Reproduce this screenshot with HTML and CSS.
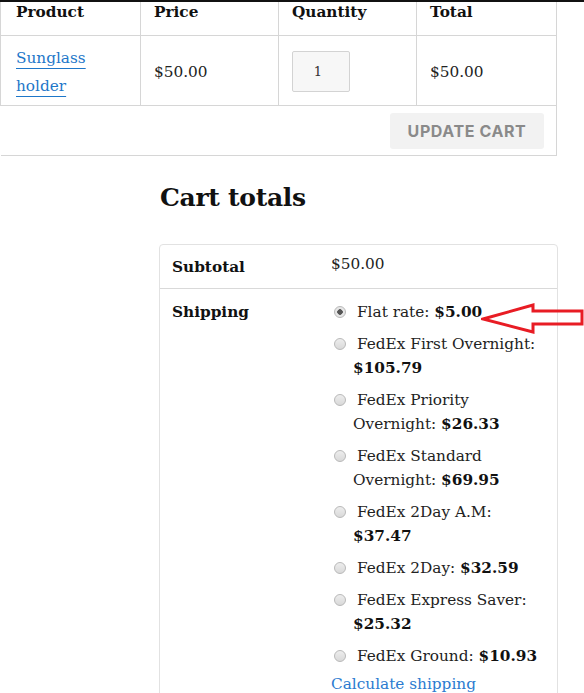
FILE: index.html
```html
<!DOCTYPE html>
<html>
<head>
<meta charset="utf-8">
<link rel="stylesheet" href="styles.css">
</head>
<body>
<div class="page">
  <table class="cart">
    <thead>
      <tr>
        <th class="c1">Product</th>
        <th class="c2">Price</th>
        <th class="c3">Quantity</th>
        <th class="c4">Total</th>
      </tr>
    </thead>
    <tbody>
      <tr class="item">
        <td><a href="#" class="plink">Sunglass holder</a></td>
        <td>$50.00</td>
        <td><input class="qty" type="text" value="1"></td>
        <td>$50.00</td>
      </tr>
      <tr class="actions">
        <td colspan="4"><button class="update">UPDATE CART</button></td>
      </tr>
    </tbody>
  </table>

  <section class="totals">
    <h2 class="totals-title">Cart totals</h2>
    <div class="totals-box">
      <div class="trow subtotal">
        <div class="tlabel">Subtotal</div>
        <div class="tvalue sub-amount">$50.00</div>
      </div>
      <div class="trow">
        <div class="tlabel">Shipping</div>
        <div class="tvalue">
          <ul class="methods">
            <li><span class="radio checked"></span>Flat rate: <strong>$5.00</strong></li>
            <li><span class="radio"></span>FedEx First Overnight: <strong>$105.79</strong></li>
            <li><span class="radio"></span>FedEx Priority Overnight: <strong>$26.33</strong></li>
            <li><span class="radio"></span>FedEx Standard Overnight: <strong>$69.95</strong></li>
            <li><span class="radio"></span>FedEx 2Day A.M: <strong>$37.47</strong></li>
            <li><span class="radio"></span>FedEx 2Day: <strong>$32.59</strong></li>
            <li><span class="radio"></span>FedEx Express Saver: <strong>$25.32</strong></li>
            <li><span class="radio"></span>FedEx Ground: <strong>$10.93</strong></li>
          </ul>
          <a href="#" class="calc">Calculate shipping</a>
        </div>
      </div>
    </div>
  </section>

  <svg class="arrow" width="104" height="34" viewBox="0 0 104 34">
    <polygon points="2,17 52,3 52,9 101,9 101,22 52,22 52,30" fill="none" stroke="#e81c24" stroke-width="3" stroke-linejoin="miter"/>
  </svg>
</div>
</body>
</html>
```

FILE: styles.css
```css
html, body {
  margin: 0;
  padding: 0;
  background: #fff;
}
body {
  font-family: "DejaVu Serif", "Liberation Serif", serif;
  font-size: 15.3px;
  color: #222;
  overflow: hidden;
}
.page {
  position: relative;
  width: 584px;
  height: 693px;
  border-top: 2px solid #111;
  box-sizing: border-box;
  overflow: hidden;
}
.cart {
  border-collapse: collapse;
  width: 556px;
  table-layout: fixed;
}
.cart th, .cart td {
  border: 1px solid #d6d6d6;
  text-align: left;
  padding: 0 13px;
  box-sizing: border-box;
}
.cart thead th {
  border-top: none;
  font-weight: bold;
  color: #111;
  line-height: 20px;
  padding-top: 0;
  padding-bottom: 13px;
  vertical-align: top;
}
.c1 { width: 140px; }
.c2 { width: 138px; }
.c3 { width: 138px; }
.c4 { width: 140px; }
.cart th.c1, .cart .item td:first-child { padding-left: 15px; }
.item td {
  height: 70px;
  line-height: 28px;
  vertical-align: middle;
  padding-top: 2px;
  padding-bottom: 0;
}
.plink {
  color: #1e77c9;
  text-decoration: underline;
  text-decoration-thickness: 1px;
  text-underline-offset: 5px;
  display: inline-block;
  width: 90px;
}
.qty {
  width: 58px;
  height: 41px;
  box-sizing: border-box;
  border: 1px solid #d3d3d3;
  border-radius: 2px;
  background: #f7f7f7;
  font-family: "DejaVu Serif", serif;
  font-size: 13px;
  color: #333;
  text-align: center;
  padding: 0 6px 0 0;
  display: block;
}
.actions td {
  border-left: none;
  height: 50px;
  text-align: right;
  padding: 0 12px 0 0;
  vertical-align: middle;
}
.update {
  width: 154px;
  height: 36px;
  border: none;
  border-radius: 3px;
  background: #f2f2f2;
  color: #8a8a8a;
  font-family: "Inter", "DejaVu Sans", sans-serif;
  font-weight: 700;
  font-size: 16px;
  letter-spacing: 0.6px;
  padding: 0;
  display: inline-block;
  vertical-align: middle;
}
.totals {
  margin-left: 159px;
  width: 399px;
}
.totals-title {
  font-family: "DejaVu Serif", serif;
  font-weight: bold;
  font-size: 25px;
  line-height: 36px;
  color: #111;
  margin: 24px 0 28px 1px;
  letter-spacing: -0.3px;
}
.totals-box {
  border: 1px solid #e2e2e2;
  border-radius: 4px;
}
.trow {
  display: flex;
  line-height: 24px;
}
.trow + .trow {
  border-top: 1px solid #d9d9d9;
}
.subtotal {
  padding: 10px 0 9px;
}
.sub-amount {
  margin-top: -3px;
}
.trow:not(.subtotal) {
  padding-top: 11px;
}
.tlabel {
  width: 159px;
  padding-left: 12px;
  box-sizing: border-box;
  font-weight: bold;
  color: #111;
}
.tvalue {
  width: 214px;
  padding-left: 12px;
  color: #222;
}
.methods {
  list-style: none;
  margin: 0;
  padding: 0;
}
.methods li {
  padding-left: 22px;
  text-indent: -19px;
  margin-bottom: 8px;
}
.methods li:last-child {
  margin-bottom: 4px;
}
.methods strong {
  font-weight: bold;
  color: #111;
}
.radio {
  display: inline-block;
  width: 12px;
  height: 12px;
  box-sizing: border-box;
  border-radius: 50%;
  border: 1px solid #b9b9b9;
  background: linear-gradient(#ededed, #d9d9d9);
  margin-right: 11px;
  vertical-align: -1px;
  position: relative;
  text-indent: 0;
}
.radio.checked {
  background: radial-gradient(circle, #555 0 2.5px, #e6e6e6 3px);
}
.calc {
  color: #2b7bd0;
  text-decoration: none;
  display: block;
}
.arrow {
  position: absolute;
  left: 481px;
  top: 300px;
}
```
